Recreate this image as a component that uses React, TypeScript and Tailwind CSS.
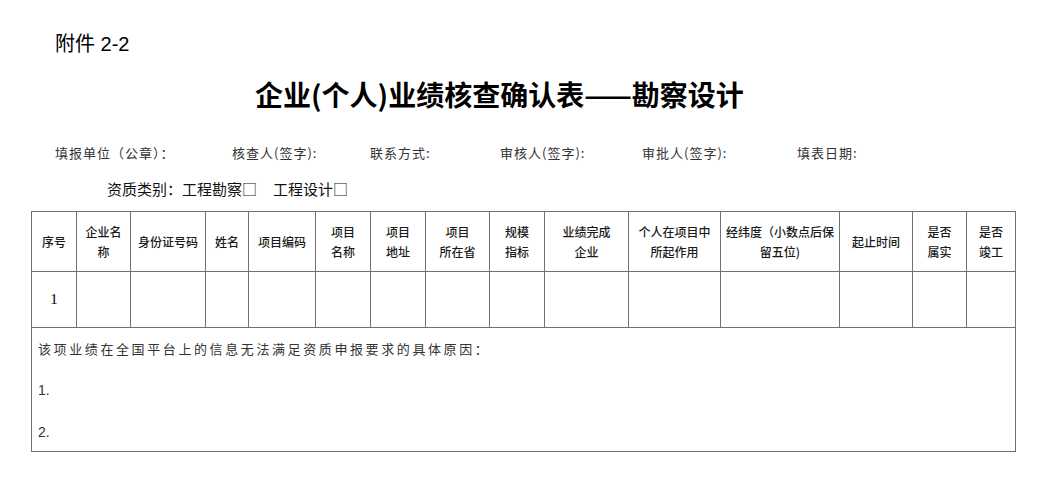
import React from "react";

const CJK = { fontFamily: '"Noto Sans CJK SC", "Noto Sans", sans-serif' };
const MIX = { fontFamily: '"Liberation Sans", "Noto Sans CJK SC", sans-serif' };

const headers: React.ReactNode[] = [
  "序号",
  <>企业名<br />称</>,
  "身份证号码",
  "姓名",
  "项目编码",
  <>项目<br />名称</>,
  <>项目<br />地址</>,
  <>项目<br />所在省</>,
  <>规模<br />指标</>,
  <>业绩完成<br />企业</>,
  <>个人在项目中<br />所起作用</>,
  <>经纬度（小数点后保<br />留五位)</>,
  "起止时间",
  <>是否<br />属实</>,
  <>是否<br />竣工</>,
];

export default function App() {
  return (
    <div className="w-[1042px] h-[485px] bg-white text-black overflow-hidden" style={CJK}>
      <div className="pl-[55px] pt-[32px] text-[20px] leading-[24px]" style={MIX}>
        附件 2-2
      </div>
      <div className="pl-[255px] mt-[20px] text-[28px] leading-[36px] font-bold whitespace-nowrap" style={CJK}>
        企业(个人)业绩核查确认表——勘察设计
      </div>
      <div className="flex mt-[31px] pl-[55px] text-[13px] leading-[20px] tracking-[1px] text-[#333] whitespace-nowrap">
        <div className="w-[177px]">填报单位（公章）：</div>
        <div className="w-[138px]">核查人(签字):</div>
        <div className="w-[130px]">联系方式:</div>
        <div className="w-[142px]">审核人(签字):</div>
        <div className="w-[155px]">审批人(签字):</div>
        <div>填表日期:</div>
      </div>
      <div className="mt-[16px] pl-[107px] text-[15px] leading-[20px] text-[#111] whitespace-nowrap">
        资质类别：工程勘察□<span className="ml-[16px]">工程设计□</span>
      </div>
      <div className="mt-[12px] ml-[31px] w-[985px] border-l border-t border-[#707070] grid grid-cols-[45px_54px_75px_43px_67px_55px_55px_64px_55px_84px_92px_119px_73px_54px_49px]">
        {headers.map((h, i) => (
          <div
            key={i}
            className="h-[60px] border-r border-b border-[#707070] flex items-center justify-center text-center text-[12px] leading-[20px] font-medium text-[#1a1a1a] whitespace-nowrap"
          >
            <div>{h}</div>
          </div>
        ))}
        {headers.map((_, i) => (
          <div
            key={"r" + i}
            className="h-[56px] border-r border-b border-[#707070] flex items-center justify-center"
          >
            {i === 0 ? (
              <span className="text-[15px]" style={{ fontFamily: '"Liberation Serif", serif' }}>
                1
              </span>
            ) : null}
          </div>
        ))}
        <div className="col-span-15 h-[124px] border-r border-b border-[#707070] pl-[6px] pt-[10px] text-[#333]">
          <div className="text-[13px] leading-[22px] tracking-[2.6px] whitespace-nowrap">
            该项业绩在全国平台上的信息无法满足资质申报要求的具体原因：
          </div>
          <div className="mt-[20px] text-[14px] leading-[20px]" style={MIX}>1.</div>
          <div className="mt-[22px] text-[14px] leading-[20px]" style={MIX}>2.</div>
        </div>
      </div>
    </div>
  );
}
